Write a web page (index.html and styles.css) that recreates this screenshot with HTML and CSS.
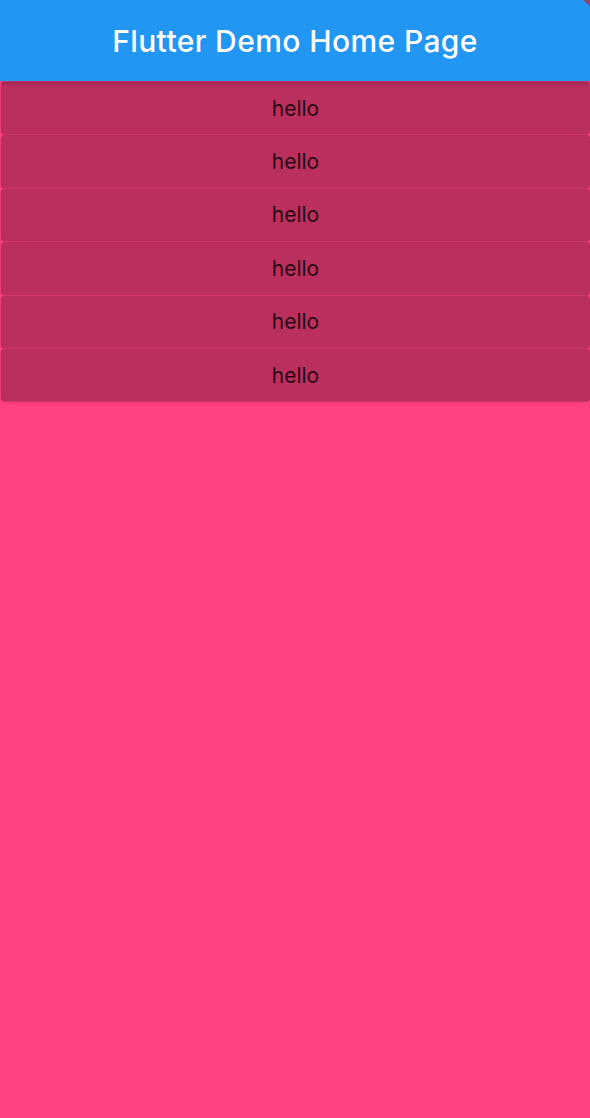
FILE: index.html
```html
<!DOCTYPE html>
<html lang="en">
<head>
    <meta charset="UTF-8">
    <meta name="viewport" content="width=device-width, initial-scale=1.0">
    <title>Flutter Demo Home Page</title>
    <link rel="stylesheet" href="styles.css">
</head>
<body>

    <header class="app-bar">
        <h1>Flutter Demo Home Page</h1>
        <!-- debug banner corner -->
        <div class="debug-banner"></div>
    </header>

    <main class="list">
        <div class="card">hello</div>
        <div class="card">hello</div>
        <div class="card">hello</div>
        <div class="card">hello</div>
        <div class="card">hello</div>
        <div class="card">hello</div>
    </main>

</body>
</html>
```

FILE: styles.css
```css
html, body {
    height: 100%;
}

body {
    font-family: Inter, Roboto, sans-serif;
    margin: 0;
    padding: 0;
    background-color: #ff4081;
    overflow: hidden;
}

.app-bar {
    position: relative;
    height: 81px;
    background-color: #2196f3;
    display: flex;
    align-items: center;
    justify-content: center;
    box-shadow: 0 2px 4px rgba(0, 0, 0, 0.25);
    z-index: 2;
    overflow: hidden;
}

.app-bar h1 {
    margin: 0;
    color: #fff;
    font-size: 30px;
    font-weight: 500;
    letter-spacing: 0.4px;
}

.debug-banner {
    position: absolute;
    top: -17px;
    right: -43px;
    width: 80px;
    height: 22px;
    background-color: rgba(200, 30, 60, 0.7);
    transform: rotate(45deg);
}

.list {
    display: flex;
    flex-direction: column;
    padding-top: 1px;
}

.card {
    height: 52.4px;
    margin: 0 0 1px 1px;
    background-color: #bb2f5e;
    border-radius: 4px;
    box-shadow: 0 1px 2px rgba(0, 0, 0, 0.2), 0 0 1px rgba(0, 0, 0, 0.15);
    display: flex;
    align-items: center;
    justify-content: center;
    font-size: 21px;
    color: rgba(0, 0, 0, 0.82);
}
```
